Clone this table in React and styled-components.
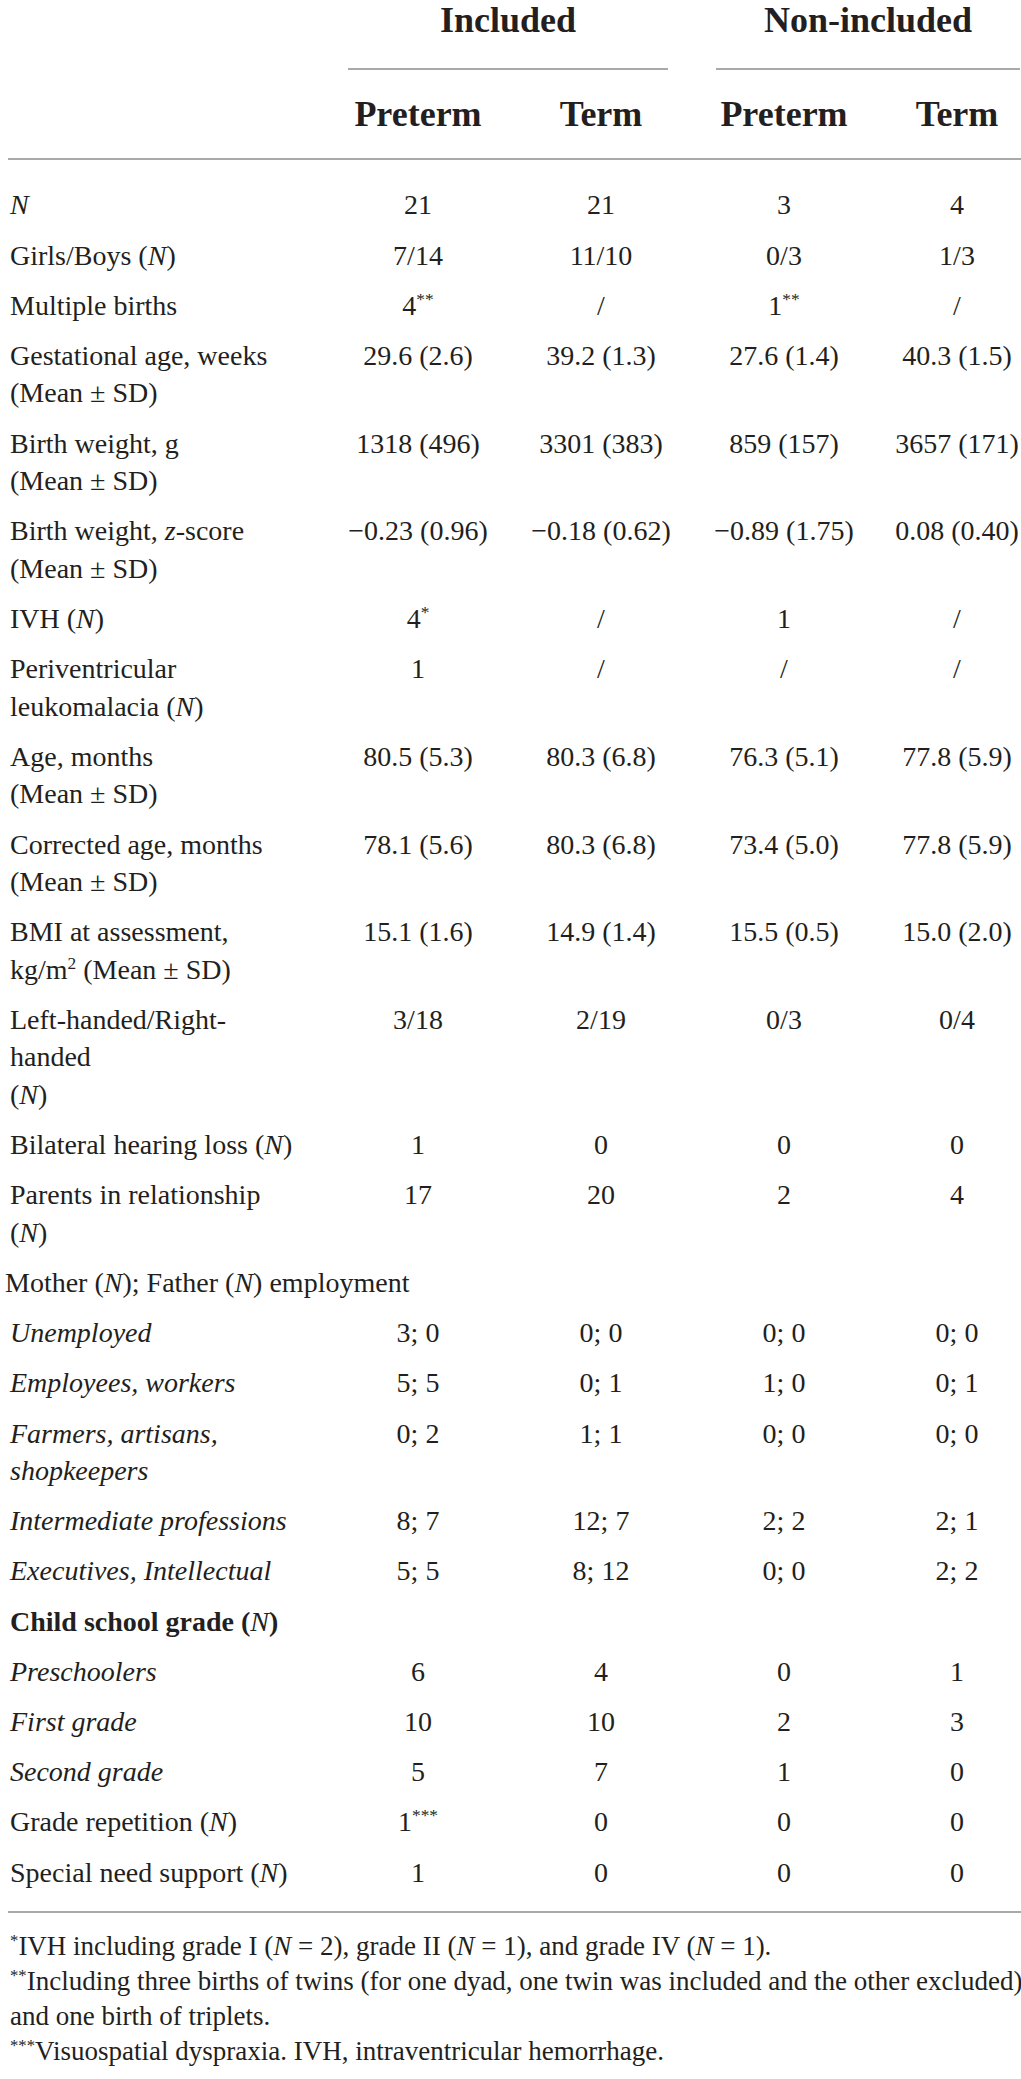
import React from 'react';
import styled, { createGlobalStyle } from 'styled-components';

const GlobalStyle = createGlobalStyle`
  html, body {
    margin: 0;
    padding: 0;
    background: #ffffff;
  }
  body {
    font-family: "Liberation Serif", "Times New Roman", serif;
    color: #231f20;
  }
`;

const COLS = '319px 182px 184px 182px 146px';

const Page = styled.div`
  width: 1021px;
  box-sizing: border-box;
  padding-left: 8px;
`;

const GroupRow = styled.div`
  display: grid;
  grid-template-columns: ${COLS};
`;

const Group = styled.div`
  grid-column: ${(p) => p.$col} / span 2;
  padding-left: ${(p) => p.$left}px;
  padding-right: ${(p) => p.$right}px;
`;

const GroupTitle = styled.div`
  font-size: 36px;
  font-weight: 700;
  line-height: 41px;
  text-align: center;
  padding-bottom: 27px;
  border-bottom: 2px solid #a9a9a9;
`;

const SubRow = styled.div`
  display: grid;
  grid-template-columns: ${COLS};
  margin-top: 24px;
  padding-bottom: 23px;
  border-bottom: 2px solid #a9a9a9;
`;

const SubHead = styled.div`
  font-size: 36px;
  font-weight: 700;
  line-height: 41px;
  text-align: center;

  &:last-child {
    padding-left: 18px;
  }
`;

const Body = styled.div`
  padding-top: 20px;
  padding-bottom: 14px;
  border-bottom: 2px solid #a9a9a9;
`;

const Row = styled.div`
  display: grid;
  grid-template-columns: ${COLS};
  padding: 6.35px 0;
  font-size: 28px;
  line-height: 37.5px;
`;

const Label = styled.div`
  padding-left: 2px;
  white-space: nowrap;
  font-style: ${(p) => (p.$italic ? 'italic' : 'normal')};
  font-weight: ${(p) => (p.$bold ? 700 : 400)};
`;

const SectionLabel = styled.div`
  grid-column: 1 / -1;
  margin-left: -3px;
  white-space: nowrap;
`;

const Value = styled.div`
  text-align: center;
  white-space: nowrap;

  &:last-child {
    padding-left: 18px;
  }
`;

const I = styled.i`
  font-style: italic;
  font-weight: 400;
`;

const Sup = styled.sup`
  font-size: 0.62em;
  line-height: 0;
  vertical-align: 0.55em;
`;

const Notes = styled.div`
  padding-top: 16px;
  padding-left: 2px;
  font-size: 27px;
  line-height: 35px;
`;

const Note = styled.div`
  white-space: nowrap;
`;

const MSD = <>(Mean ± SD)</>;

const rows = [
  { label: <I>N</I>, values: ['21', '21', '3', '4'] },
  { label: <>Girls/Boys (<I>N</I>)</>, values: ['7/14', '11/10', '0/3', '1/3'] },
  {
    label: <>Multiple births</>,
    values: [<>4<Sup>**</Sup></>, '/', <>1<Sup>**</Sup></>, '/'],
  },
  {
    label: <>Gestational age, weeks<br />{MSD}</>,
    values: ['29.6 (2.6)', '39.2 (1.3)', '27.6 (1.4)', '40.3 (1.5)'],
  },
  {
    label: <>Birth weight, g<br />{MSD}</>,
    values: ['1318 (496)', '3301 (383)', '859 (157)', '3657 (171)'],
  },
  {
    label: <>Birth weight, <I>z</I>-score<br />{MSD}</>,
    values: ['−0.23 (0.96)', '−0.18 (0.62)', '−0.89 (1.75)', '0.08 (0.40)'],
  },
  { label: <>IVH (<I>N</I>)</>, values: [<>4<Sup>*</Sup></>, '/', '1', '/'] },
  {
    label: <>Periventricular<br />leukomalacia (<I>N</I>)</>,
    values: ['1', '/', '/', '/'],
  },
  {
    label: <>Age, months<br />{MSD}</>,
    values: ['80.5 (5.3)', '80.3 (6.8)', '76.3 (5.1)', '77.8 (5.9)'],
  },
  {
    label: <>Corrected age, months<br />{MSD}</>,
    values: ['78.1 (5.6)', '80.3 (6.8)', '73.4 (5.0)', '77.8 (5.9)'],
  },
  {
    label: <>BMI at assessment,<br />kg/m<Sup>2</Sup> {MSD}</>,
    values: ['15.1 (1.6)', '14.9 (1.4)', '15.5 (0.5)', '15.0 (2.0)'],
  },
  {
    label: <>Left-handed/Right-<br />handed<br />(<I>N</I>)</>,
    values: ['3/18', '2/19', '0/3', '0/4'],
  },
  { label: <>Bilateral hearing loss (<I>N</I>)</>, values: ['1', '0', '0', '0'] },
  {
    label: <>Parents in relationship<br />(<I>N</I>)</>,
    values: ['17', '20', '2', '4'],
  },
  { section: <>Mother (<I>N</I>); Father (<I>N</I>) employment</> },
  { label: <>Unemployed</>, italic: true, values: ['3; 0', '0; 0', '0; 0', '0; 0'] },
  { label: <>Employees, workers</>, italic: true, values: ['5; 5', '0; 1', '1; 0', '0; 1'] },
  {
    label: <>Farmers, artisans,<br />shopkeepers</>,
    italic: true,
    values: ['0; 2', '1; 1', '0; 0', '0; 0'],
  },
  { label: <>Intermediate professions</>, italic: true, values: ['8; 7', '12; 7', '2; 2', '2; 1'] },
  { label: <>Executives, Intellectual</>, italic: true, values: ['5; 5', '8; 12', '0; 0', '2; 2'] },
  { label: <>Child school grade (<I>N</I>)</>, bold: true, values: ['', '', '', ''] },
  { label: <>Preschoolers</>, italic: true, values: ['6', '4', '0', '1'] },
  { label: <>First grade</>, italic: true, values: ['10', '10', '2', '3'] },
  { label: <>Second grade</>, italic: true, values: ['5', '7', '1', '0'] },
  {
    label: <>Grade repetition (<I>N</I>)</>,
    values: [<>1<Sup>***</Sup></>, '0', '0', '0'],
  },
  { label: <>Special need support (<I>N</I>)</>, values: ['1', '0', '0', '0'] },
];

const App = () => {
  return (
    <>
      <GlobalStyle />
      <Page>
        <GroupRow>
          <Group $col={2} $left={21} $right={25}>
            <GroupTitle>Included</GroupTitle>
          </Group>
          <Group $col={4} $left={23} $right={1}>
            <GroupTitle>Non-included</GroupTitle>
          </Group>
        </GroupRow>

        <SubRow>
          <div />
          <SubHead>Preterm</SubHead>
          <SubHead>Term</SubHead>
          <SubHead>Preterm</SubHead>
          <SubHead>Term</SubHead>
        </SubRow>

        <Body>
          {rows.map((r, i) =>
            r.section ? (
              <Row key={i}>
                <SectionLabel>{r.section}</SectionLabel>
              </Row>
            ) : (
              <Row key={i}>
                <Label $italic={r.italic} $bold={r.bold}>{r.label}</Label>
                {r.values.map((v, j) => (
                  <Value key={j}>{v}</Value>
                ))}
              </Row>
            )
          )}
        </Body>

        <Notes>
          <Note>
            <Sup>*</Sup>IVH including grade I (<I>N</I> = 2), grade II (<I>N</I> = 1), and grade IV (<I>N</I> = 1).
          </Note>
          <Note>
            <Sup>**</Sup>Including three births of twins (for one dyad, one twin was included and the other excluded)
          </Note>
          <Note>and one birth of triplets.</Note>
          <Note>
            <Sup>***</Sup>Visuospatial dyspraxia. IVH, intraventricular hemorrhage.
          </Note>
        </Notes>
      </Page>
    </>
  );
};

export default App;
